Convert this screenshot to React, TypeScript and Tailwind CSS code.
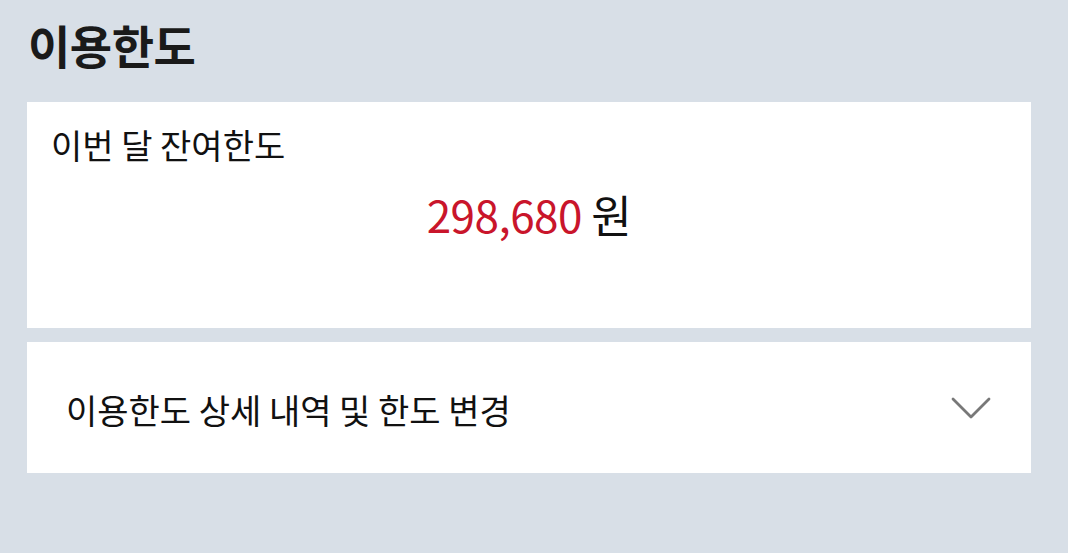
const font = { fontFamily: '"Noto Sans CJK KR", "Noto Sans", sans-serif' };

function Chevron() {
  return (
    <svg width="40" height="24" viewBox="0 0 40 24" fill="none" className="text-[#787878]">
      <polyline points="2,3 20,21 38,3" stroke="currentColor" strokeWidth="2.8" strokeLinecap="round" strokeLinejoin="round" />
    </svg>
  );
}

export default function App() {
  return (
    <div style={font} className="w-[1068px] h-[553px] bg-[#d8dfe7] px-[27px] pt-[13px] text-[#111]">
      <h1 className="pl-[1px] text-[46px] leading-[62px] font-bold tracking-[-0.5px] text-[#1a1a1a]">이용한도</h1>
      <div className="mt-[27px] flex flex-col gap-[14px] w-[1004px]">
        {/* remaining limit card */}
        <section className="h-[226px] bg-white px-[24px] pt-[20px]">
          <p className="text-[34px] leading-[46px]">이번 달 잔여한도</p>
          <p className="mt-[18px] text-center text-[44px] leading-[56px] tracking-[-0.5px]">
            <span className="text-[#c9152b]">298,680</span> 원
          </p>
        </section>
        {/* detail accordion row */}
        <button className="h-[131px] bg-white flex items-center justify-between pl-[39px] pr-[40px]">
          <span className="text-[34px] leading-[46px] pt-[4px]">이용한도 상세 내역 및 한도 변경</span>
          <Chevron />
        </button>
      </div>
    </div>
  );
}
